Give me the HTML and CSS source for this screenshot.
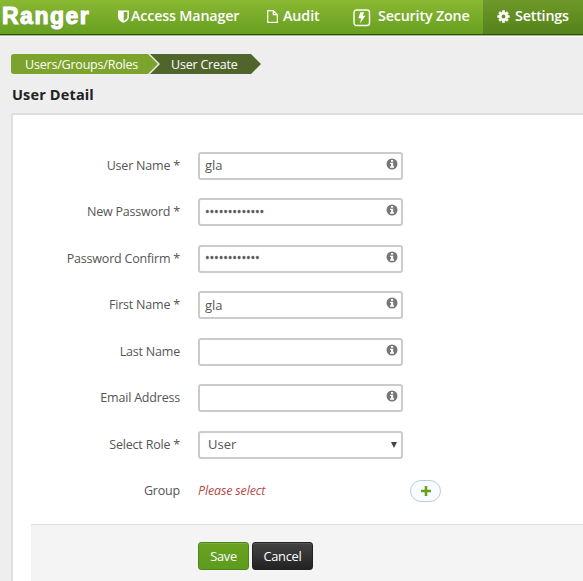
FILE: index.html
```html
<!DOCTYPE html>
<html lang="en">
<head>
<meta charset="utf-8">
<title>Ranger - User Detail</title>
<link rel="stylesheet" href="styles.css">
</head>
<body>
<svg class="defs" width="0" height="0">
  <symbol id="info" viewBox="0 0 12 12"><circle cx="6" cy="6" r="5.5" fill="#777"/><path d="M5 1.900h2.200v1.800H5zM4.100 4.700h3.100v3.600H8v1.400H4V8.300h1V6.100h-.9z" fill="#fff"/></symbol>
</svg>
<header class="topbar">
  <a class="brand">Ranger</a>
  <nav class="nav">
    <a class="nav-item access"><svg width="11" height="13" viewBox="0 0 11 13"><path fill="#fff" fill-rule="evenodd" d="M0 .5h11v6.200c0 3-2.600 4.800-5.500 6.100C2.600 11.500 0 9.700 0 6.700zM5.700 2v8.900c2.400-1.200 3.700-2.500 3.700-4.300V2z"/></svg><span>Access Manager</span></a>
    <a class="nav-item audit"><svg width="11" height="13" viewBox="0 0 11 13"><path fill="none" stroke="#fff" stroke-width="1.200" d="M.7.7h5.600l4 4v7.600H.7zM6.300.7v4h4"/></svg><span>Audit</span></a>
    <a class="nav-item zone"><svg width="18" height="18" viewBox="0 0 18 18"><rect x="1" y="1" width="15.500" height="15.500" rx="2.500" fill="none" stroke="#fff" stroke-width="1.400"/><path fill="#fff" d="M7.300 3.200h3.800L9.700 6.700h2.700L7 14.600l1.100-5.400H5.400z"/></svg><span>Security Zone</span></a>
    <a class="nav-item settings"><svg width="13" height="13" viewBox="0 0 13 13"><g stroke="#fff" stroke-width="2.700"><path d="M6.500.3v12.400M.3 6.500h12.400M2.200 2.200l8.600 8.600M10.800 2.200l-8.600 8.600"/></g><circle cx="6.500" cy="6.500" r="4.600" fill="#fff"/><circle cx="6.500" cy="6.500" r="1.900" fill="#65921f"/></svg><span>Settings</span></a>
  </nav>
</header>
<main class="page">
  <nav class="crumbs">
    <a class="crumb first"><span>Users/Groups/Roles</span></a>
    <a class="crumb last"><span>User Create</span></a>
  </nav>
  <h1 class="title"><span>User Detail</span></h1>
  <form class="panel">
    <div class="fields">
      <div class="row"><label><span>User Name *</span></label><div class="control"><span class="value">gla</span><svg class="info" width="12" height="12"><use href="#info"/></svg></div></div>
      <div class="row"><label><span>New Password *</span></label><div class="control"><span class="value dots">•••••••••••••</span><svg class="info" width="12" height="12"><use href="#info"/></svg></div></div>
      <div class="row"><label><span>Password Confirm *</span></label><div class="control"><span class="value dots">••••••••••••</span><svg class="info" width="12" height="12"><use href="#info"/></svg></div></div>
      <div class="row"><label><span>First Name *</span></label><div class="control"><span class="value">gla</span><svg class="info" width="12" height="12"><use href="#info"/></svg></div></div>
      <div class="row"><label><span>Last Name</span></label><div class="control"><span class="value"></span><svg class="info" width="12" height="12"><use href="#info"/></svg></div></div>
      <div class="row"><label><span>Email Address</span></label><div class="control"><span class="value"></span><svg class="info" width="12" height="12"><use href="#info"/></svg></div></div>
      <div class="row"><label><span>Select Role *</span></label><div class="control select"><span class="value">User</span><svg width="6" height="6" viewBox="0 0 6 6"><path d="M0 0h6L3 6z" fill="#444"/></svg></div></div>
      <div class="row"><label><span>Group</span></label><em class="empty">Please select</em><button type="button" class="add" aria-label="Add group"><svg width="10" height="10" viewBox="0 0 10 10"><path d="M5 0v10M0 5h10" stroke="#689f1b" stroke-width="2.600"/></svg></button></div>
    </div>
    <div class="actions">
      <button type="button" class="btn save">Save</button>
      <button type="button" class="btn cancel">Cancel</button>
    </div>
  </form>
</main>
</body>
</html>
```
FILE: styles.css
```css
* { box-sizing: border-box; }
body {
  margin: 0;
  width: 583px;
  height: 581px;
  overflow: hidden;
  background: #eee;
  color: #555;
  font: 12.5px/20px "Open Sans", sans-serif;
}
svg { display: block; flex: none; }
.defs { position: absolute; }

.topbar {
  display: flex;
  height: 36px;
  border-bottom: 1px solid #a9b696;
  box-shadow: inset 0 -1px #315009, 0 1px #fafafa;
  background: linear-gradient(#8ab833, #669f20);
  color: #fff;
}
.brand {
  width: 118px;
  padding-left: 2px;
  font: 900 23px/32px "Liberation Sans", sans-serif;
  letter-spacing: 1.5px;
  -webkit-text-stroke: 1.1px #fff;
  text-shadow: 0 1px 1px #747d68;
}
.nav { display: flex; flex: 1; }
.nav-item {
  display: flex;
  align-items: center;
  height: 34px;
  padding-bottom: 2px;
  font-size: 14.3px;
  font-weight: 600;
  white-space: nowrap;
}
.access { width: 149px; gap: 2px; letter-spacing: -.17px; }
.audit { width: 86px; gap: 5px; letter-spacing: -.1px; }
.zone { width: 130px; gap: 7px; letter-spacing: -.17px; }
.zone svg { margin-top: 4px; }
.settings {
  width: 100px;
  padding-left: 14px;
  gap: 5px;
  letter-spacing: -.2px;
  background: linear-gradient(#6e9828, #55821b);
}

.page { padding: 18px 0 0 11px; }
.crumbs { display: flex; height: 20px; color: #fff; letter-spacing: -.2px; }
.crumb { display: flex; align-items: center; }
.crumb span { padding-top: 1px; }
.crumb.first {
  width: 148px;
  padding-left: 14px;
  border-radius: 3px 0 0 3px;
  background: #7ca32b;
  clip-path: polygon(0 0, 137px 0, 147px 50%, 137px 100%, 0 100%);
}
.crumb.last {
  width: 111px;
  margin-left: -9px;
  padding-left: 21px;
  background: #50652b;
  clip-path: polygon(0 0, 101px 0, 100% 50%, 101px 100%, 0 100%, 10px 50%);
}
.title {
  margin: 11px 0 8px;
  padding-left: 1px;
  color: #222;
  font-size: 14.5px;
  letter-spacing: .15px;
  line-height: 20px;
  font-weight: 700;
}

.panel {
  height: 480px;
  border: 2px solid #dfdfdf;
  border-right: 0;
  border-radius: 3px 0 0;
  background: #fff;
}
.fields { padding-top: 36.6px; }
.row { display: flex; align-items: flex-start; height: 46.5px; }
.row label { width: 167px; padding-top: 4.4px; text-align: right; letter-spacing: -.2px; }
.control {
  display: flex;
  align-items: center;
  justify-content: space-between;
  width: 205px;
  height: 28px;
  margin-left: 18px;
  padding: 0 3px 0 5px;
  border: 2px solid #cbcbcb;
  border-radius: 3px;
}
.value { padding-bottom: 1px; font-size: 13px; }
.info { margin-bottom: 3.4px; }
.dots { font-size: 12.5px; letter-spacing: -.15px; -webkit-text-stroke: .3px #555; }
.select { padding: 0 4px 0 8px; }
.empty { width: 194px; margin-left: 18px; padding: 4.4px 0 0; color: #b94a48; letter-spacing: -.15px; }
.add {
  display: flex;
  align-items: center;
  justify-content: center;
  width: 31px;
  height: 22px;
  margin: 3.4px 0 0 18px;
  padding: 0;
  border: 1px solid #becdd8;
  border-radius: 11px;
  background: #f8fcff;
}
.actions {
  display: flex;
  gap: 3px;
  height: 70px;
  margin: .4px 0 0 18px;
  padding: 17px 0 0 167px;
  border-top: 1px solid #dedede;
  background: #f4f4f4;
}
.btn {
  height: 28px;
  padding: 0;
  border: 1px solid;
  border-radius: 3px;
  color: #fff;
  font: 12.8px/20px "Open Sans", sans-serif;
  letter-spacing: -.25px;
}
.save { width: 51px; border-color: #4c861b; background: linear-gradient(#6aa11f, #5d9c1d); box-shadow: inset 0 1px #7caf41; }
.cancel { width: 61px; border-color: #222; background: linear-gradient(#444, #222); box-shadow: inset 0 1px #555; }
```
